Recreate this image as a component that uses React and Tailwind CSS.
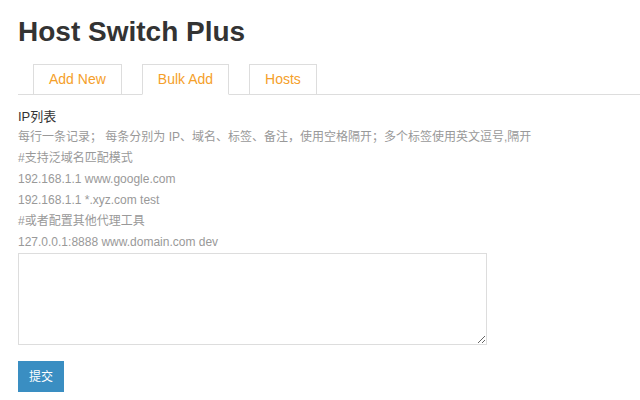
const tabs = ['Add New', 'Bulk Add', 'Hosts'];

const lines = [
  '每行一条记录； 每条分别为 IP、域名、标签、备注，使用空格隔开；多个标签使用英文逗号,隔开',
  '#支持泛域名匹配模式',
  '192.168.1.1 www.google.com',
  '192.168.1.1 *.xyz.com test',
  '#或者配置其他代理工具',
  '127.0.0.1:8888 www.domain.com dev',
];

export default function App() {
  return (
    <div
      className="min-h-screen bg-white pl-[18px] pt-[14px]"
      style={{ fontFamily: '"Liberation Sans", Arial, "Noto Sans CJK SC", sans-serif' }}
    >
      <h1 className="text-[28px] font-bold leading-[36px] text-[#333]">Host Switch Plus</h1>

      <div className="mt-[14px] flex border-b border-[#ddd] pl-[15px]">
        {tabs.map((t) => {
          const active = t === 'Bulk Add';
          return (
            <div
              key={t}
              className={
                active
                  ? 'mr-[20px] -mb-px h-[31px] border border-b-white border-[#ddd] bg-white text-[14px] leading-[29px] text-[#f5a02a] px-[15px]'
                  : 'mr-[20px] h-[30px] border border-b-0 border-[#ddd] text-[14px] leading-[29px] text-[#f5a02a] px-[15px]'
              }
            >
              {t}
            </div>
          );
        })}
      </div>

      <div className="mt-[12px] text-[13px] leading-[20px] text-[#333]">IP列表</div>
      <div className="text-[12px] leading-[21px] text-[#999]">
        {lines.map((l) => (
          <div key={l}>{l}</div>
        ))}
      </div>

      <textarea className="block h-[92px] w-[469px] border border-[#ddd] outline-none" />

      <button className="mt-[16px] block h-[31px] w-[46px] bg-[#3a8ec2] text-[12px] text-white">提交</button>
    </div>
  );
}
